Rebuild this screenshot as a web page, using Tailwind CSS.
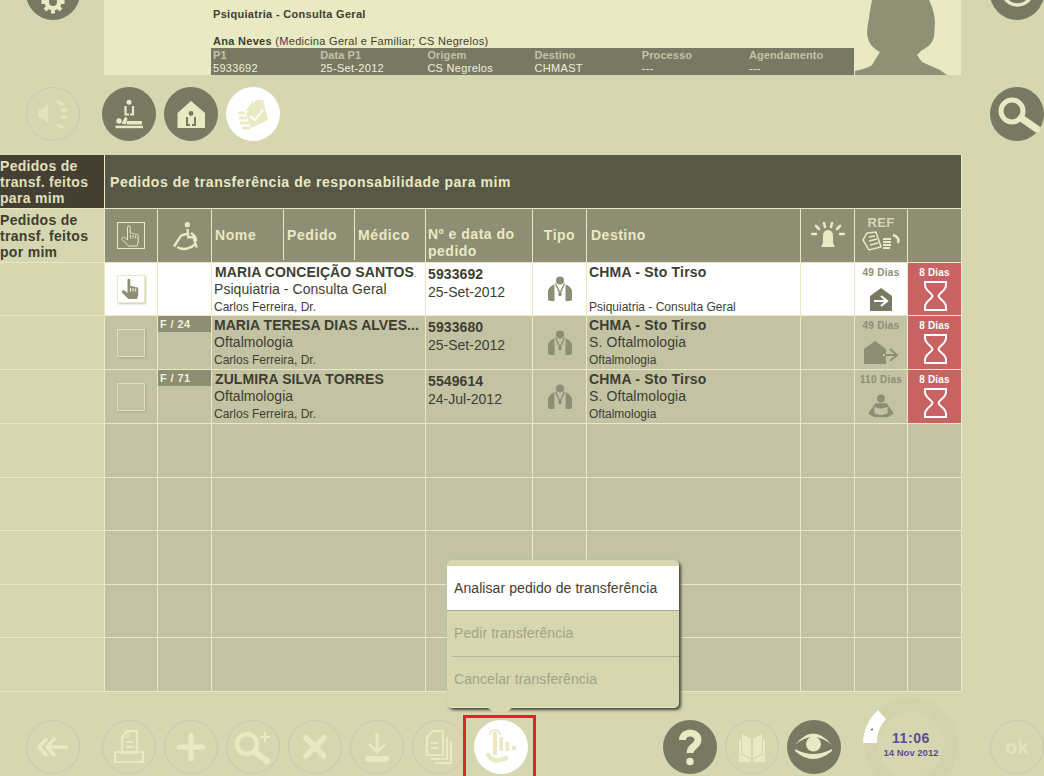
<!DOCTYPE html>
<html lang="pt"><head><meta charset="utf-8"><script src="https://cdn.jsdelivr.net/npm/@tailwindcss/browser@4"></script></head>
<body class="m-0">
<svg class="hidden" width="0" height="0">
<symbol id="hand" viewBox="0 0 24 24"><path d="M8.5 3.2C8.5 1.4 11.2 1.4 11.2 3.2V9.5C11.8 8.8 13.8 8.8 14 10C14.4 9.4 16.4 9.4 16.6 10.6C17 10 19.2 10.2 19.2 11.6V18L18 22H9.5L3 15.5C2 14 4 12.5 5.5 13.5L8.5 16Z"/><path d="M11.6 11V14.5M14.1 11V14.5M16.7 11.5V14.5" fill="none" stroke="currentColor" stroke-width="1"/></symbol>
<symbol id="steth" viewBox="0 0 24 26"><circle cx="12" cy="4.5" r="4" fill="currentColor"/><path d="M5 9L6.5 8.5V25H2Q0 25 0 23V14Q1 11 5 9ZM19 9L17.5 8.5V25H22Q24 25 24 23V14Q23 11 19 9Z" fill="currentColor"/><path d="M7.5 7.5L12 17.5L16.5 7.5" fill="none" stroke="currentColor" stroke-width="1.4"/><circle cx="12" cy="18.5" r="1.8" fill="currentColor"/></symbol>
<symbol id="glass" viewBox="0 0 24 32"><path d="M2 2H23V5C23 11 15.5 13 15.5 16C15.5 19 23 21 23 27V30H2V27C2 21 9.5 19 9.5 16C9.5 13 2 11 2 5Z" fill="none" stroke="#fff" stroke-width="2"/></symbol>
</svg>
<div class="relative w-[1044px] h-[776px] overflow-hidden bg-[#d6d6b0] font-['Liberation_Sans',Arial,sans-serif] text-[#3e3e31]">

<!-- header -->
<div class="flex h-[75px]">
  <div class="w-[104px] shrink-0 pl-[26px]">
    <div class="w-[54px] h-[54px] -mt-[34px] rounded-full bg-[#797862]">
      <svg viewBox="0 0 54 54" class="w-[54px] h-[54px]"><path d="M27 24.5V47.5M15.5 36H38.5M19 28L35 44M35 28L19 44" stroke="#e9e9c3" stroke-width="4"/><circle cx="27" cy="36" r="8.5" fill="#e9e9c3"/><circle cx="27" cy="36" r="4" fill="#797862"/></svg>
    </div>
  </div>
  <div class="w-[857px] flex bg-[#e9e9c3]">
    <div class="w-[750px] flex flex-col pl-[107px]">
      <div class="flex flex-col flex-1 pl-[2px] text-[11px] leading-[13px] tracking-[0.3px]">
        <div class="mt-[8px] font-bold">Psiquiatria - Consulta Geral</div>
        <div class="mt-[14px]"><b>Ana Neves</b> (Medicina Geral e Familiar; CS Negrelos)</div>
      </div>
      <div class="grid grid-cols-[repeat(6,107.2px)] h-[27px] pl-[2px] bg-[#797862] text-[11px] leading-[13px] pt-[1px] overflow-hidden">
        <div><div class="font-bold text-[#c3c3a4] tracking-[0.1px]">P1</div><div class="text-[#f0f0d8] tracking-[0.3px]">5933692</div></div>
        <div><div class="font-bold text-[#c3c3a4] tracking-[0.1px]">Data P1</div><div class="text-[#f0f0d8] tracking-[0.3px]">25-Set-2012</div></div>
        <div><div class="font-bold text-[#c3c3a4] tracking-[0.1px]">Origem</div><div class="text-[#f0f0d8] tracking-[0.3px]">CS Negrelos</div></div>
        <div><div class="font-bold text-[#c3c3a4] tracking-[0.1px]">Destino</div><div class="text-[#f0f0d8] tracking-[0.3px]">CHMAST</div></div>
        <div><div class="font-bold text-[#c3c3a4] tracking-[0.1px]">Processo</div><div class="text-[#f0f0d8] tracking-[0.3px]">---</div></div>
        <div><div class="font-bold text-[#c3c3a4] tracking-[0.1px]">Agendamento</div><div class="text-[#f0f0d8] tracking-[0.3px]">---</div></div>
      </div>
    </div>
    <svg viewBox="0 0 107 75" class="w-[107px] h-[75px]"><path d="M1 71C8 69 14 68 18 65L21 60L26 52C20 49 15 44 14 38C12 32 14 25 15 18C16 10 17 5 18 0H75C78 6 81 15 81 23L80 37C78 44 73 48 68 50L63 55L68 62L86 70L93 75H1Z" fill="#909077"/></svg>
  </div>
  <div class="ml-[29px] w-[54px] h-[54px] -mt-[34px] rounded-full bg-[#797862] shrink-0">
    <svg viewBox="0 0 54 54" class="w-[54px] h-[54px]"><circle cx="27.5" cy="24" r="15" fill="none" stroke="#e9e9c3" stroke-width="3.5"/></svg>
  </div>
</div>

<!-- tool row -->
<div class="flex mt-[12px] pl-[26px] h-[54px]">
  <div class="w-[54px] h-[54px] rounded-full border border-[#c9c9a5]">
    <svg viewBox="0 0 52 52" class="w-[52px] h-[52px]"><path d="M11 21H15L21 16V35L15 30H11Z" fill="#e3e3bd"/><path d="M31 14L35 16M35 22H39M35 29H39M31 37L35 39" stroke="#e3e3bd" stroke-width="3.5" stroke-linecap="round"/></svg>
  </div>
  <div class="ml-[22px] w-[54px] h-[54px] rounded-full bg-[#797862]">
    <svg viewBox="0 0 54 54" class="w-[54px] h-[54px]" fill="#e9e9c3"><circle cx="27" cy="15.3" r="2.5"/><path d="M23.5 19V27.5H27M31 19V27.5H28" fill="none" stroke="#e9e9c3" stroke-width="2.2"/><circle cx="17" cy="34" r="2.7"/><path d="M19.5 36.5L23 30L25.5 31L24 37.5Z"/><rect x="25" y="34" width="15" height="3.5"/><rect x="13.5" y="38.7" width="27.5" height="2.5"/></svg>
  </div>
  <div class="ml-[8px] w-[54px] h-[54px] rounded-full bg-[#797862]">
    <svg viewBox="0 0 54 54" class="w-[54px] h-[54px]"><path d="M27 14L41 26V41H13.5V26Z" fill="#e9e9c3"/><circle cx="27" cy="26.5" r="2.4" fill="#797862"/><path d="M23 30V38H26M31 30V38H28" stroke="#797862" stroke-width="2" fill="none"/></svg>
  </div>
  <div class="ml-[8px] w-[54px] h-[54px] rounded-full bg-white">
    <svg viewBox="0 0 54 54" class="w-[54px] h-[54px]"><path d="M19.5 24L27 14V24Z" fill="#e9e9c3"/><path d="M30 13H37L42 33L25 41L20 27" fill="#e9e9c3"/><path d="M24 29L29 33L37 23" fill="none" stroke="#fff" stroke-width="2"/><path d="M12 26H19M13 31H21M14 36H23M16 41H24" stroke="#e9e9c3" stroke-width="2.8"/></svg>
  </div>
  <div class="ml-[710px] w-[54px] h-[54px] rounded-full bg-[#797862]">
    <svg viewBox="0 0 54 54" class="w-[54px] h-[54px]"><circle cx="22" cy="24" r="11" fill="none" stroke="#e9e9c3" stroke-width="5"/><path d="M31 31L47 42" stroke="#e9e9c3" stroke-width="7" stroke-linecap="round"/></svg>
  </div>
</div>

<!-- table -->
<div class="mt-[14px] w-[962px] grid grid-cols-[104px_53px_54px_214px_107px_54px_214px_54px_53px_55px] grid-rows-[53px_54px_53px_54px_54px_54px_53px_54px_53px_54px] border-b border-[#e9e9c3] [&>div]:border-[#e9e9c3] text-[14px]">
  <div class="bg-[#453f33] text-[#e0e0bb] font-bold leading-[16px] tracking-[0.3px] pt-[3px] whitespace-nowrap">Pedidos de<br>transf. feitos<br>para mim</div>
  <div class="col-span-9 bg-[#585846] border-l border-r text-[#e9e9c3] font-bold tracking-[0.55px] flex items-center pl-[5px] pt-[2px]">Pedidos de transferência de responsabilidade para mim</div>

  <div class="border-t font-bold leading-[16px] tracking-[0.3px] pt-[3px] whitespace-nowrap">Pedidos de<br>transf. feitos<br>por mim</div>
  <div class="border-t border-l bg-[#8e8e74] flex items-center justify-center"><div class="w-[28px] h-[27px] border border-[#e9e9c3] flex items-center justify-center"><svg class="w-[24px] h-[24px] fill-none stroke-[#e9e9c3] text-[#e9e9c3]"><use href="#hand"/></svg></div></div>
  <div class="border-t border-l bg-[#8e8e74] flex items-center justify-center"><svg viewBox="0 0 28 30" class="w-[28px] h-[30px] ml-[3px]" fill="none" stroke="#e9e9c3" stroke-width="2.4"><circle cx="15.3" cy="3.7" r="2.6" fill="#e9e9c3" stroke="none"/><path d="M15.5 8L16.3 16.3H21.5L24.7 26.5M2 25.5L9 14.7Q12 13 15.3 13M5.3 26Q13 31 23 23.5M19 12Q24 15 24.3 20"/></svg></div>
  <div class="border-t border-l bg-[#8e8e74] flex text-[#e9e9c3] font-bold tracking-[0.6px]">
    <div class="w-[72px] flex items-center pl-[3px] pt-[2px] border-r border-[#e9e9c3] mb-[2px]">Nome</div>
    <div class="w-[71px] flex items-center pl-[3px] pt-[2px] border-r border-[#e9e9c3] mb-[2px]">Pedido</div>
    <div class="w-[70px] flex items-center pl-[3px] pt-[2px] mb-[2px]">Médico</div>
  </div>
  <div class="border-t border-l bg-[#8e8e74] text-[#e9e9c3] font-bold tracking-[0.5px] leading-[17px] pl-[2px] pt-[17px]">Nº e data do pedido</div>
  <div class="border-t border-l bg-[#8e8e74] text-[#e9e9c3] font-bold tracking-[0.5px] flex items-center justify-center">Tipo</div>
  <div class="border-t border-l bg-[#8e8e74] text-[#e9e9c3] font-bold tracking-[0.5px] flex items-center pl-[4px]">Destino</div>
  <div class="border-t border-l bg-[#8e8e74] flex items-center justify-center"><svg viewBox="0 0 34 28" class="w-[34px] h-[28px]"><path d="M12 21V14Q12 8 17 8Q22 8 22 14V21L24 25H10Z" fill="#e9e9c3"/><path d="M1 12H5M5 4L8 7M13 1L14 5M21 1L20 5M29 4L26 7M33 12H29" stroke="#e9e9c3" stroke-width="2.5" stroke-linecap="round"/></svg></div>
  <div class="border-t border-l bg-[#8e8e74] flex flex-col items-center pt-[6px] text-[#d6d6b0] font-bold text-[13px] leading-[15px] tracking-[0.3px]">REF<svg viewBox="0 0 42 20" class="w-[42px] h-[20px] mt-[1px]"><path d="M7 2L16 1L21 16L9 19L3 9Z" fill="none" stroke="#e9e9c3" stroke-width="1.5"/><path d="M9 6L15 5M9 10L17 8M10 14L18 12" stroke="#e9e9c3" stroke-width="1.5"/><path d="M23 8H31M23 11H31M23 14H31M23 17H30" stroke="#e9e9c3" stroke-width="2"/><path d="M33 4Q40 6 38 12" fill="none" stroke="#e9e9c3" stroke-width="2.5"/></svg></div>
  <div class="border-t border-l border-r bg-[#8e8e74]"></div>

  <!-- row 1 -->
  <div class="border-t"></div>
  <div class="border-t border-l bg-white flex items-center justify-center"><div class="w-[28px] h-[28px] bg-white border border-[#e9e9c3] shadow-[1px_1px_2px_#c9c9a5] flex items-center justify-center"><svg class="w-[24px] h-[24px] fill-[#8e8e74] text-white"><use href="#hand"/></svg></div></div>
  <div class="border-t border-l bg-white"></div>
  <div class="border-t border-l bg-white pl-[2px]"><div class="whitespace-nowrap overflow-hidden font-bold tracking-[0.1px] leading-[16px] pt-[1px] pl-[1px]">MARIA CONCEIÇÃO SANTOS<span class="text-[6px] leading-[0]">.</span></div><div class="tracking-[0.05px] leading-[17px] pt-[1px]">Psiquiatria - Consulta Geral</div><div class="text-[12px] leading-[16px] mt-[1px]">Carlos Ferreira, Dr.</div></div>
  <div class="border-t border-l bg-white pl-[2px] pt-[2px] leading-[19px]"><div class="font-bold tracking-[0.1px]">5933692</div><div class="-mt-[1px]">25-Set-2012</div></div>
  <div class="border-t border-l bg-white flex items-center justify-center"><svg class="w-[24px] h-[26px] text-[#8e8e74]"><use href="#steth"/></svg></div>
  <div class="border-t border-l bg-white pl-[2px] flex flex-col"><div class="font-bold tracking-[0.2px] leading-[16px] pt-[1px]">CHMA - Sto Tirso</div><div class="mt-auto text-[12px] leading-[16px]">Psiquiatria - Consulta Geral</div></div>
  <div class="border-t border-l bg-white"></div>
  <div class="border-t border-l bg-white flex flex-col items-center pt-[4px] text-[10px] font-bold leading-[12px] tracking-[0.3px] text-[#8e8e74]">49 Dias<svg viewBox="0 0 24 24" class="w-[24px] h-[24px] mt-[8px]"><path d="M12 1L23 9V24H1V9Z" fill="#797862"/><path d="M5 14H17M12 9L18 14L12 19" fill="none" stroke="#fff" stroke-width="2.2"/></svg></div>
  <div class="border-t border-l border-r bg-[#c96262] flex flex-col items-center pt-[4px] text-[10px] font-bold leading-[12px] text-white tracking-[0.2px]">8 Dias<svg class="w-[24px] h-[32px] mt-[1px]"><use href="#glass"/></svg></div>

  <!-- row 2 -->
  <div class="border-t"></div>
  <div class="border-t border-l bg-[#c3c3a4] flex items-center justify-center"><div class="w-[28px] h-[28px] border border-[#dfdfb9] shadow-[1px_1px_2px_#aaa98c]"></div></div>
  <div class="border-t border-l bg-[#c3c3a4]"><div class="h-[16px] bg-[#8e8e74] text-[#f0f0d8] text-[11px] leading-[16px] font-bold pl-[2px] tracking-[0.4px]">F / 24</div></div>
  <div class="border-t border-l bg-[#c3c3a4] pl-[2px]"><div class="whitespace-nowrap overflow-hidden font-bold tracking-[0.05px] leading-[16px] pt-[1px]">MARIA TERESA DIAS ALVES...</div><div class="tracking-[0.05px] leading-[17px] pt-[1px]">Oftalmologia</div><div class="text-[12px] leading-[16px] mt-[1px]">Carlos Ferreira, Dr.</div></div>
  <div class="border-t border-l bg-[#c3c3a4] pl-[2px] pt-[2px] leading-[19px]"><div class="font-bold tracking-[0.1px]">5933680</div><div class="-mt-[1px]">25-Set-2012</div></div>
  <div class="border-t border-l bg-[#c3c3a4] flex items-center justify-center"><svg class="w-[24px] h-[26px] text-[#8e8e74]"><use href="#steth"/></svg></div>
  <div class="border-t border-l bg-[#c3c3a4] pl-[2px]"><div class="font-bold tracking-[0.2px] leading-[16px] pt-[1px]">CHMA - Sto Tirso</div><div class="tracking-[0.1px] leading-[17px] pt-[1px]">S. Oftalmologia</div><div class="text-[12px] leading-[16px] mt-[1px]">Oftalmologia</div></div>
  <div class="border-t border-l bg-[#c3c3a4]"></div>
  <div class="border-t border-l bg-[#c3c3a4] flex flex-col items-center pt-[4px] text-[10px] font-bold leading-[12px] tracking-[0.3px] text-[#8e8e74]">49 Dias<svg viewBox="0 0 36 24" class="w-[36px] h-[24px] mt-[8px]"><path d="M12 1L23 9V24H1V9Z" fill="#8e8e74"/><path d="M18 15H33M27 9L34 15L27 21" fill="none" stroke="#8e8e74" stroke-width="2"/><path d="M21 14V16" stroke="#c3c3a4" stroke-width="2"/></svg></div>
  <div class="border-t border-l border-r bg-[#c96262] flex flex-col items-center pt-[4px] text-[10px] font-bold leading-[12px] text-white tracking-[0.2px]">8 Dias<svg class="w-[24px] h-[32px] mt-[1px]"><use href="#glass"/></svg></div>

  <!-- row 3 -->
  <div class="border-t"></div>
  <div class="border-t border-l bg-[#c3c3a4] flex items-center justify-center"><div class="w-[28px] h-[28px] border border-[#dfdfb9] shadow-[1px_1px_2px_#aaa98c]"></div></div>
  <div class="border-t border-l bg-[#c3c3a4]"><div class="h-[16px] bg-[#8e8e74] text-[#f0f0d8] text-[11px] leading-[16px] font-bold pl-[2px] tracking-[0.4px]">F / 71</div></div>
  <div class="border-t border-l bg-[#c3c3a4] pl-[2px]"><div class="whitespace-nowrap overflow-hidden font-bold tracking-[0.1px] leading-[16px] pt-[1px] pl-[1px]">ZULMIRA SILVA TORRES</div><div class="tracking-[0.05px] leading-[17px] pt-[1px]">Oftalmologia</div><div class="text-[12px] leading-[16px] mt-[1px]">Carlos Ferreira, Dr.</div></div>
  <div class="border-t border-l bg-[#c3c3a4] pl-[2px] pt-[2px] leading-[19px]"><div class="font-bold tracking-[0.1px]">5549614</div><div class="-mt-[1px]">24-Jul-2012</div></div>
  <div class="border-t border-l bg-[#c3c3a4] flex items-center justify-center"><svg class="w-[24px] h-[26px] text-[#8e8e74]"><use href="#steth"/></svg></div>
  <div class="border-t border-l bg-[#c3c3a4] pl-[2px]"><div class="font-bold tracking-[0.2px] leading-[16px] pt-[1px]">CHMA - Sto Tirso</div><div class="tracking-[0.1px] leading-[17px] pt-[1px]">S. Oftalmologia</div><div class="text-[12px] leading-[16px] mt-[1px]">Oftalmologia</div></div>
  <div class="border-t border-l bg-[#c3c3a4]"></div>
  <div class="border-t border-l bg-[#c3c3a4] flex flex-col items-center pt-[4px] text-[10px] font-bold leading-[12px] tracking-[0.3px] text-[#8e8e74]">110 Dias<svg viewBox="0 0 30 26" class="w-[28px] h-[26px] mt-[7px]"><circle cx="15" cy="5" r="4.2" fill="#8e8e74"/><path d="M9 10H21L28 20Q29 22 26 23L22 25H8L4 23Q1 22 2 20Z" fill="#8e8e74"/><path d="M8 14L15 16L22 14V21L15 23L8 21Z" fill="#c3c3a4"/></svg></div>
  <div class="border-t border-l border-r bg-[#c96262] flex flex-col items-center pt-[4px] text-[10px] font-bold leading-[12px] text-white tracking-[0.2px]">8 Dias<svg class="w-[24px] h-[32px] mt-[1px]"><use href="#glass"/></svg></div>

  <!-- empty rows -->
  <div class="border-t"></div><div class="border-t border-l bg-[#c3c3a4]"></div><div class="border-t border-l bg-[#c3c3a4]"></div><div class="border-t border-l bg-[#c3c3a4]"></div><div class="border-t border-l bg-[#c3c3a4]"></div><div class="border-t border-l bg-[#c3c3a4]"></div><div class="border-t border-l bg-[#c3c3a4]"></div><div class="border-t border-l bg-[#c3c3a4]"></div><div class="border-t border-l bg-[#c3c3a4]"></div><div class="border-t border-l border-r bg-[#c3c3a4]"></div>
  <div class="border-t"></div><div class="border-t border-l bg-[#c3c3a4]"></div><div class="border-t border-l bg-[#c3c3a4]"></div><div class="border-t border-l bg-[#c3c3a4]"></div><div class="border-t border-l bg-[#c3c3a4]"></div><div class="border-t border-l bg-[#c3c3a4]"></div><div class="border-t border-l bg-[#c3c3a4]"></div><div class="border-t border-l bg-[#c3c3a4]"></div><div class="border-t border-l bg-[#c3c3a4]"></div><div class="border-t border-l border-r bg-[#c3c3a4]"></div>
  <div class="border-t"></div><div class="border-t border-l bg-[#c3c3a4]"></div><div class="border-t border-l bg-[#c3c3a4]"></div><div class="border-t border-l bg-[#c3c3a4]"></div><div class="border-t border-l bg-[#c3c3a4]"></div><div class="border-t border-l bg-[#c3c3a4]"></div><div class="border-t border-l bg-[#c3c3a4]"></div><div class="border-t border-l bg-[#c3c3a4]"></div><div class="border-t border-l bg-[#c3c3a4]"></div><div class="border-t border-l border-r bg-[#c3c3a4]"></div>
  <div class="border-t"></div><div class="border-t border-l bg-[#c3c3a4]"></div><div class="border-t border-l bg-[#c3c3a4]"></div><div class="border-t border-l bg-[#c3c3a4]"></div><div class="border-t border-l bg-[#c3c3a4]"></div><div class="border-t border-l bg-[#c3c3a4]"></div><div class="border-t border-l bg-[#c3c3a4]"></div><div class="border-t border-l bg-[#c3c3a4]"></div><div class="border-t border-l bg-[#c3c3a4]"></div><div class="border-t border-l border-r bg-[#c3c3a4]"></div>
  <div class="border-t"></div><div class="border-t border-l bg-[#c3c3a4]"></div><div class="border-t border-l bg-[#c3c3a4]"></div><div class="border-t border-l bg-[#c3c3a4]"></div><div class="border-t border-l bg-[#c3c3a4]"></div><div class="border-t border-l bg-[#c3c3a4]"></div><div class="border-t border-l bg-[#c3c3a4]"></div><div class="border-t border-l bg-[#c3c3a4]"></div><div class="border-t border-l bg-[#c3c3a4]"></div><div class="border-t border-l border-r bg-[#c3c3a4]"></div>
</div>

<!-- footer -->
<div class="mt-[28px] flex pl-[26px]">
  <div class="w-[54px] h-[54px] rounded-full border border-[#c9c9a5]"><svg viewBox="0 0 52 52" class="w-[52px] h-[52px]" fill="none" stroke="#e9e9c3" stroke-width="3.5"><path d="M20 17L12 26L20 35M28 17L20 26L28 35M21 26H41"/></svg></div>
  <div class="ml-[22px] w-[54px] h-[54px] rounded-full border border-[#c9c9a5]"><svg viewBox="0 0 52 52" class="w-[52px] h-[52px]" fill="none" stroke="#e9e9c3" stroke-width="2.2"><path d="M24 10H34V32H19V16Z"/><path d="M19 16H25V10" stroke-width="1.5"/><path d="M12 31H19M34 31H40V41H12V31Z"/><path d="M23 21H30M23 26H30"/></svg></div>
  <div class="ml-[8px] w-[54px] h-[54px] rounded-full border border-[#c9c9a5]"><svg viewBox="0 0 52 52" class="w-[52px] h-[52px]" stroke="#e9e9c3" stroke-width="5" stroke-linecap="round"><path d="M26 14V38M14 26H38"/></svg></div>
  <div class="ml-[8px] w-[54px] h-[54px] rounded-full border border-[#c9c9a5]"><svg viewBox="0 0 52 52" class="w-[52px] h-[52px]" fill="none" stroke="#e9e9c3"><circle cx="20" cy="23" r="10" stroke-width="4.5"/><path d="M28 31L40 40" stroke-width="6" stroke-linecap="round"/><path d="M38 11V21M33 16H43" stroke-width="2"/></svg></div>
  <div class="ml-[8px] w-[54px] h-[54px] rounded-full border border-[#c9c9a5]"><svg viewBox="0 0 52 52" class="w-[52px] h-[52px]" stroke="#e9e9c3" stroke-width="5.5" stroke-linecap="round"><path d="M17 17L35 35M35 17L17 35"/></svg></div>
  <div class="ml-[8px] w-[54px] h-[54px] rounded-full border border-[#c9c9a5]"><svg viewBox="0 0 52 52" class="w-[52px] h-[52px]" fill="none" stroke="#e9e9c3"><path d="M26 12V31M18 23L26 31L34 23" stroke-width="3"/><path d="M17 38H35" stroke-width="6" stroke-linecap="round"/></svg></div>
  <div class="ml-[8px] w-[54px] h-[54px] rounded-full border border-[#c9c9a5]"><svg viewBox="0 0 52 52" class="w-[52px] h-[52px]" fill="none" stroke="#e9e9c3" stroke-width="2.2"><path d="M20 10H30V34H14V16ZM18 22H25M18 27H25M34 16V38H18"/><path d="M38 20V42H22"/></svg></div>
  <div class="ml-[8px] w-[54px] h-[54px] rounded-full bg-white"><svg viewBox="0 0 54 54" class="w-[54px] h-[54px]" fill="none" stroke="#e9e9c3"><path d="M16 15A5 5 0 0 1 26 15" stroke-width="1.8"/><path d="M19 12H23V35H19Z" fill="#e9e9c3" stroke="none"/><path d="M25.5 17H29V31H25.5ZM31.5 22H35V31H31.5ZM38 26H42V30H38Z" fill="#e9e9c3" stroke="none"/><path d="M14 35Q20 44 32 38" stroke-width="4.5" stroke-linecap="round"/></svg></div>
  <div class="ml-[135px] w-[54px] h-[54px] rounded-full bg-[#797862]"><svg viewBox="0 0 54 54" class="w-[54px] h-[54px]" fill="none" stroke="#e9e9c3"><path d="M19.5 20C19.5 10.5 35 10.5 35 20C35 26 27 26 27 33" stroke-width="7"/><circle cx="27" cy="41.5" r="3.7" fill="#e9e9c3" stroke="none"/></svg></div>
  <div class="ml-[8px] w-[54px] h-[54px] rounded-full border border-[#c9c9a5]"><svg viewBox="0 0 52 52" class="w-[52px] h-[52px]" fill="#e9e9c3"><path d="M16 13L25 18V37L16 32ZM36 13L27 18V37L36 32ZM13 19H15V33L25 39V41H13ZM39 19H37V33L27 39V41H39Z"/></svg></div>
  <div class="ml-[8px] w-[54px] h-[54px] rounded-full bg-[#797862]"><svg viewBox="0 0 54 54" class="w-[54px] h-[54px]"><path d="M8 25Q26 2 45 25Q26 9 8 25ZM8 29Q26 39 45 29L45 31Q26 47 8 31Z" fill="#e9e9c3"/><circle cx="26.5" cy="24" r="7.5" fill="#e9e9c3"/></svg></div>
  <div class="ml-[149px] w-[54px] h-[54px] rounded-full border border-[#c9c9a5] flex items-center justify-center text-[#e3e3bd] font-bold text-[20px]">ok</div>
</div>

<!-- clock -->
<div class="absolute left-[863px] top-[697px] w-[96px] h-[96px]">
  <svg viewBox="0 0 96 96" class="absolute inset-0 w-[96px] h-[96px]"><circle cx="48" cy="48" r="40" fill="none" stroke="#d2d2ac" stroke-width="14"/><path d="M48 0V14M72 6.4L65 18.6M89.6 24L77.4 31M1 46H14" stroke="#d6d6b0" stroke-width="1"/><path d="M0 46A48 48 0 0 1 15 13L23 22A33 33 0 0 0 14 46Z" fill="#fff"/><path d="M10 32L8 33" stroke="#797862" stroke-width="1.5"/></svg>
  <div class="absolute left-0 right-0 top-[33px] text-center text-[#5b4a9e] font-bold text-[14px] leading-[16px] tracking-[0.6px]">11:06</div>
  <div class="absolute left-0 right-0 top-[50px] text-center text-[#5b4a9e] font-bold text-[9.5px] leading-[12px]">14 Nov 2012</div>
</div>

<!-- popup -->
<div class="absolute left-[447px] top-[560px] w-[232px] h-[148px] rounded-[5px] bg-[#d6d6b0] shadow-[2px_2px_3px_#46463a] border-b border-[#e9e9c3] text-[14px]">
  <div class="h-[6px]"></div>
  <div class="h-[44px] bg-white flex items-center pl-[7px] text-[#3e3e31] tracking-[0.08px]">Analisar pedido de transferência</div>
  <div class="h-[46px] border-t border-[#aaa98c] flex items-center pl-[7px] text-[#a3a388] tracking-[0.1px]">Pedir transferência</div>
  <div class="ml-[5px] h-[46px] border-t border-[#b4b494] flex items-center pl-[2px] text-[#a3a388] tracking-[0.1px]">Cancelar transferência</div>
  <div class="absolute left-[40px] top-[147px] w-0 h-0 border-x-[13px] border-x-transparent border-t-[12px] border-t-[#d6d6b0]"></div>
</div>
<div class="absolute left-[463px] top-[715px] w-[73px] h-[70px] border-[3px] border-[#e8202a]"></div>
</div>
</body></html>
